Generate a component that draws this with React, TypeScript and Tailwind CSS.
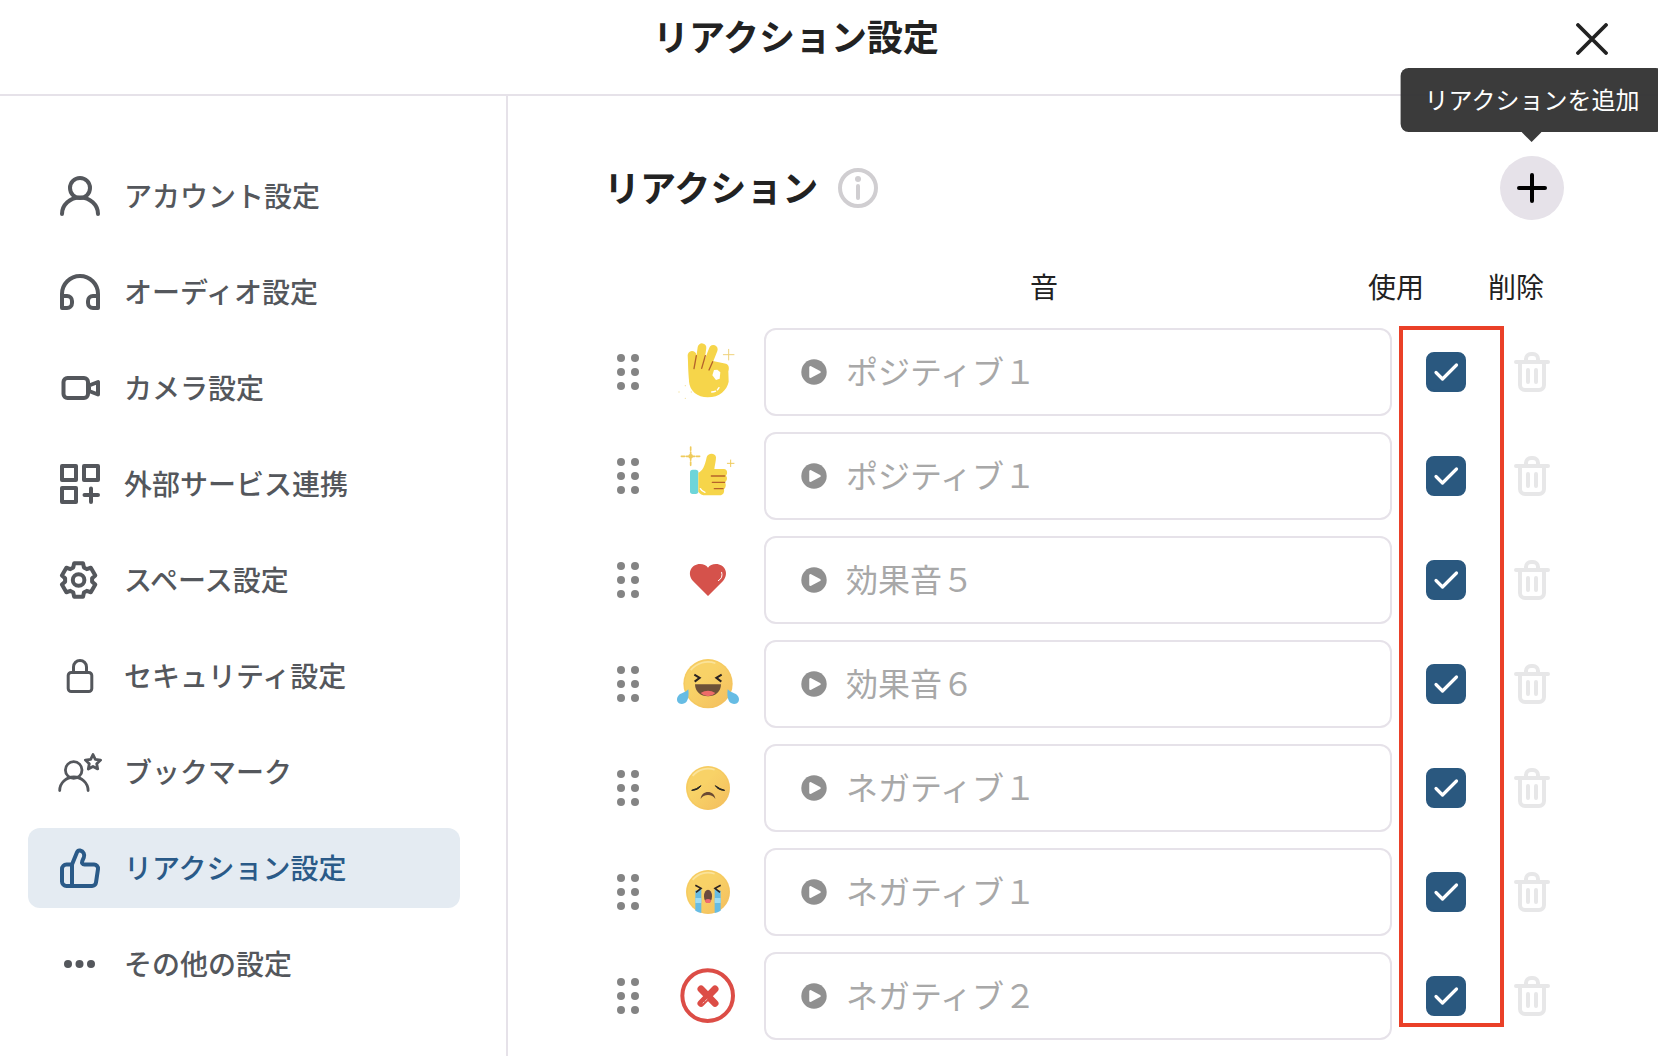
import { useState } from "react";
import type { ReactNode } from "react";

const starPoints = (cx: number, cy: number, outer: number, inner: number) =>
  Array.from({ length: 10 }, (_, i) => {
    const r = i % 2 === 0 ? outer : inner;
    const a = (Math.PI / 5) * i - Math.PI / 2;
    return `${cx + r * Math.cos(a)},${cy + r * Math.sin(a)}`;
  }).join(" ");

const gearPoints = (cx: number, cy: number) =>
  Array.from({ length: 6 }, (_, i) =>
    [
      [-23, 13.6],
      [-15, 17.3],
      [15, 17.3],
      [23, 13.6],
    ].map(([offset, r]) => {
      const a = ((i * 60 + offset - 90) * Math.PI) / 180;
      return `${cx + r * Math.cos(a)},${cy + r * Math.sin(a)}`;
    }),
  )
    .flat()
    .join(" ");

function NavIcon({ width = 4, children }: { width?: number; children: ReactNode }) {
  return (
    <svg
      viewBox="0 0 48 48"
      className="size-12 shrink-0"
      fill="none"
      stroke="currentColor"
      strokeWidth={width}
      strokeLinecap="round"
      strokeLinejoin="round"
      aria-hidden="true"
    >
      {children}
    </svg>
  );
}

const navItems: { label: string; icon: ReactNode }[] = [
  {
    label: "アカウント設定",
    icon: (
      <NavIcon>
        <circle cx="24" cy="16" r="10" />
        <path d="M6 42a18 16.5 0 0 1 36 0" />
      </NavIcon>
    ),
  },
  {
    label: "オーディオ設定",
    icon: (
      <NavIcon>
        <path d="M6 40V26a18 18 0 0 1 36 0v14h-5a5 5 0 0 1-5-5v-2a5 5 0 0 1 5-5h5M6 28h5a5 5 0 0 1 5 5v2a5 5 0 0 1-5 5H6" />
      </NavIcon>
    ),
  },
  {
    label: "カメラ設定",
    icon: (
      <NavIcon>
        <rect x="7.5" y="14" width="24.5" height="20" rx="4" />
        <path d="M33 21.5 42 18v12.500L33 27z" />
      </NavIcon>
    ),
  },
  {
    label: "外部サービス連携",
    icon: (
      <NavIcon>
        <rect x="6" y="6" width="14" height="14" />
        <rect x="28" y="6" width="14" height="14" />
        <rect x="6" y="28" width="14" height="14" />
        <path d="M35 28.500v13.500M28.500 35H42" />
      </NavIcon>
    ),
  },
  {
    label: "スペース設定",
    icon: (
      <NavIcon>
        <polygon points={gearPoints(22.6, 24)} />
        <circle cx="22.6" cy="24" r="5.8" />
      </NavIcon>
    ),
  },
  {
    label: "セキュリティ設定",
    icon: (
      <NavIcon width={3}>
        <rect x="12.2" y="20.5" width="23.6" height="19" rx="3" />
        <path d="M17.500 20v-5a6.500 6.500 0 0 1 13 0v5" />
      </NavIcon>
    ),
  },
  {
    label: "ブックマーク",
    icon: (
      <NavIcon width={2.8}>
        <circle cx="17.7" cy="22" r="8.3" />
        <path d="M3.700 42.500a14.200 13.500 0 0 1 28.400 0" />
        <polygon points={starPoints(37, 14.5, 8, 3.9)} />
      </NavIcon>
    ),
  },
  {
    label: "リアクション設定",
    icon: (
      <NavIcon>
        <path d="M16 20.500h-5.500A4.500 4.500 0 0 0 6 25v12.500a4.500 4.500 0 0 0 4.500 4.500H36a4 4 0 0 0 4-3.500l2-13.500a4 4 0 0 0-4-4.500h-9.500c-2 0-3-1.500-2.200-3.500l1.500-3.500c1.200-3-.3-6.200-3.800-7-1.300-.3-2.300.2-3 1.800L16 20.500V42" />
      </NavIcon>
    ),
  },
  {
    label: "その他の設定",
    icon: (
      <NavIcon>
        <g fill="currentColor" stroke="none">
          <circle cx="12" cy="24" r="4" />
          <circle cx="23.5" cy="24" r="4" />
          <circle cx="35" cy="24" r="4" />
        </g>
      </NavIcon>
    ),
  },
];

function OkHand() {
  return (
    <svg viewBox="216 48 216 216" className="size-[72px]" fill="none" strokeLinecap="round" aria-hidden="true">
      <g stroke="#f6d54a" strokeWidth="26">
        <path d="M276 106l4 74M306 83l-10 70M340 88l-22 56" />
      </g>
      <path
        d="M264 108l3 75c1 30 26 49 56 49 36 0 58-22 63-47l-1-31c3-10 2-20-7-23l-36-7-44 10z"
        fill="#f6d54a"
      />
      <path d="M342 150l10-1 9 8-2 19-11 4-11-14z" fill="#fff" />
      <path d="M289 107l-7 39M316 107l-11 38M338 125l-11 25" stroke="#b5632b" strokeWidth="4" />
      <path d="M335 216q15 0 22-13" stroke="#fff" strokeWidth="4" strokeDasharray="12 7" />
      <path d="M386 88v32M370 104h32" stroke="#efd27c" strokeWidth="3" />
      <g fill="#f3e2a0">
        <circle cx="237" cy="216" r="2" />
        <circle cx="256" cy="197" r="2" />
        <circle cx="274" cy="216" r="2" />
        <circle cx="256" cy="235" r="2" />
      </g>
    </svg>
  );
}

function ThumbUp() {
  return (
    <svg viewBox="216 360 216 216" className="size-[72px]" fill="none" strokeLinecap="round" aria-hidden="true">
      <rect x="270" y="449" width="25" height="73" rx="8" fill="#6dd5d9" />
      <path
        d="M295 458c12-4 20-20 25-46 3-14 27-14 28 0 0 12-4 25-5 35h29c10 0 12 13 6 20 5 6 4 14-3 20 4 7 3 15-3 21 2 11-4 18-12 18h-42c-12 0-18-4-23-11z"
        fill="#f6d54a"
      />
      <path d="M334 468h40M337 487h37M343 506h26" stroke="#b5632b" strokeWidth="4" />
      <path d="M301 506q4 8 14 11" stroke="#fff" strokeWidth="4" />
      <path d="M272 381v56M244 409h56" stroke="#efcb5c" strokeWidth="5" strokeDasharray="10 5" />
      <circle cx="272" cy="409" r="7" fill="#efcb5c" />
      <path d="M392 420v20M382 430h20" stroke="#efcb5c" strokeWidth="3" />
    </svg>
  );
}

function Heart() {
  return (
    <svg viewBox="216 42 216 216" className="size-[72px]" fill="none" strokeLinecap="round" aria-hidden="true">
      <path
        d="M324 198l-45-45c-20-24-4-51 21-51 11 0 19 4 24 11 5-7 13-11 24-11 25 0 41 27 21 51z"
        fill="#d5524b"
      />
      <path d="M365 127q5 17-10 25" stroke="#fff" strokeWidth="3" />
    </svg>
  );
}

function Face({ id, cy, r }: { id: string; cy: number; r: number }) {
  return (
    <>
      <defs>
        <linearGradient id={id} x1="0" y1="0" x2="1" y2="1">
          <stop offset="0.4" stopColor="#f8d267" />
          <stop offset="1" stopColor="#f3bd5e" />
        </linearGradient>
      </defs>
      <circle cx="324" cy={cy} r={r} fill={`url(#${id})`} />
      <circle cx="324" cy={cy} r={r - 3} stroke="#f3c35e" strokeWidth="3" opacity="0.6" />
      <path
        d={`M${324 - r * 0.7} ${cy - r * 0.55}A${r * 0.9} ${r * 0.9} 0 0 1 ${324 + r * 0.3} ${cy - r * 0.83}`}
        stroke="#fae39a"
        strokeWidth="5"
      />
    </>
  );
}

function Laugh() {
  return (
    <svg viewBox="216 354 216 216" className="size-[72px]" fill="none" aria-hidden="true">
      <Face id="face-laugh" cy={461} r={74} />
      <path d="M283 434l16 9.500-15 11.500M365 434l-16 9.500 15 11.500" stroke="#2b2320" strokeWidth="6" />
      <path d="M285 463h78c0 22-17 36-39 36s-39-14-39-36" fill="#6d5138" />
      <path d="M302 489q22-13 44 0-10 10-22 10t-22-10" fill="#ed6b69" />
      <path d="M265 478c3 24-2 44-19 44-15 0-19-15-11-25 8-9 22-9 30-19" fill="#66bce4" />
      <path d="M383 478c-3 24 2 44 19 44 15 0 19-15 11-25-8-9-22-9-30-19" fill="#66bce4" />
    </svg>
  );
}

function Sad() {
  return (
    <svg viewBox="216 36 216 216" className="size-[72px]" fill="none" aria-hidden="true">
      <Face id="face-sad" cy={144} r={66} />
      <path d="M275 151q19 0 28-14-13 10-28 14M374 151q-19 0-28-14 13 10 28 14" fill="#222" stroke="#222" strokeWidth="3" />
      <path d="M302 177c2-28 42-28 44 0-8-16-36-16-44 0" fill="#6b4a33" />
    </svg>
  );
}

function Cry() {
  return (
    <svg viewBox="216 348 216 216" className="size-[72px]" fill="none" aria-hidden="true">
      <Face id="face-cry" cy={456} r={66} />
      <path d="M286 452l18-5v72q-9-1-18-7zM362 452l-18-5v72q9-1 18-7z" fill="#66bce4" />
      <path d="M286 474h18v15h-18zM344 474h18v15h-18z" fill="#9ddcf4" />
      <path d="M286 436l17 9-15 12M362 436l-17 9 15 12" stroke="#2b2320" strokeWidth="5" />
      <ellipse cx="324" cy="469" rx="12" ry="20" fill="#6b4a3f" />
      <ellipse cx="324" cy="483" rx="9" ry="6" fill="#ef6a70" />
    </svg>
  );
}

function Cross() {
  return (
    <svg viewBox="216 660 216 216" className="size-[72px]" fill="none" strokeLinecap="round" aria-hidden="true">
      <circle cx="323" cy="767" r="76" stroke="#dc4d46" strokeWidth="12" />
      <path d="M303 747l42 43M345 747l-42 43" stroke="#dc4d46" strokeWidth="21" />
      <path d="M309 789l12-11" stroke="#fff" strokeWidth="2" strokeDasharray="3 5 9" />
    </svg>
  );
}

const reactions: { name: string; sound: string; picture: ReactNode }[] = [
  { name: "OK", sound: "ポジティブ１", picture: <OkHand /> },
  { name: "いいね", sound: "ポジティブ１", picture: <ThumbUp /> },
  { name: "ハート", sound: "効果音５", picture: <Heart /> },
  { name: "笑い", sound: "効果音６", picture: <Laugh /> },
  { name: "残念", sound: "ネガティブ１", picture: <Sad /> },
  { name: "号泣", sound: "ネガティブ１", picture: <Cry /> },
  { name: "バツ", sound: "ネガティブ２", picture: <Cross /> },
];

function ReactionRow({ name, sound, picture }: { name: string; sound: string; picture: ReactNode }) {
  const [enabled, setEnabled] = useState(true);
  return (
    <tr className="flex items-center">
      <td className="flex w-10 justify-center">
        <button type="button" aria-label={`${name}を並べ替え`} className="text-[#848484]">
          <svg viewBox="0 0 24 40" className="h-10 w-6" fill="currentColor" aria-hidden="true">
            <circle cx="5" cy="6" r="4" />
            <circle cx="19" cy="6" r="4" />
            <circle cx="5" cy="20" r="4" />
            <circle cx="19" cy="20" r="4" />
            <circle cx="5" cy="34" r="4" />
            <circle cx="19" cy="34" r="4" />
          </svg>
        </button>
      </td>
      <td className="w-[116px] pl-6">{picture}</td>
      <td className="min-w-0 flex-1">
        <button
          type="button"
          className="flex h-[88px] w-full items-center gap-4 rounded-xl border-2 border-[#e6e2e9] px-8 text-left text-[32px] leading-10 text-[#a8a8a8]"
        >
          <svg viewBox="0 0 32 32" className="size-8 shrink-0" aria-hidden="true">
            <circle cx="16" cy="16" r="12.7" fill="#909090" />
            <path d="M12.500 11.300v9.400l9-4.700z" fill="#fff" stroke="#fff" strokeWidth="2.5" strokeLinejoin="round" />
          </svg>
          <span className="pb-1">{sound}</span>
        </button>
      </td>
      <td className="flex w-[108px] justify-center">
        <label className="relative block size-10">
          <input
            type="checkbox"
            checked={enabled}
            onChange={(e) => setEnabled(e.target.checked)}
            aria-label={`${name}を使用`}
            className="peer block size-10 appearance-none rounded-lg border-2 border-[#2a587f] checked:bg-[#2a587f]"
          />
          <svg
            viewBox="0 0 40 40"
            className="pointer-events-none absolute inset-0 hidden size-10 peer-checked:block"
            fill="none"
            stroke="#fff"
            strokeWidth="3.2"
            strokeLinecap="round"
            strokeLinejoin="round"
            aria-hidden="true"
          >
            <path d="M10 20.500l6.500 6.500L30.500 13" />
          </svg>
        </label>
      </td>
      <td className="flex w-16 justify-center">
        <button type="button" aria-label={`${name}を削除`} className="text-[#e7e7e8]">
          <svg
            viewBox="0 0 40 40"
            className="size-10"
            fill="none"
            stroke="currentColor"
            strokeWidth="4"
            strokeLinecap="round"
            aria-hidden="true"
          >
            <path d="M4 10h32M14 10V7a5 5 0 0 1 5-5h2a5 5 0 0 1 5 5v3M8 10v23a5 5 0 0 0 5 5h14a5 5 0 0 0 5-5V10M16 18v12M24 18v12" />
          </svg>
        </button>
      </td>
    </tr>
  );
}

export default function App() {
  return (
    <div
      lang="ja"
      className="flex h-screen flex-col overflow-hidden bg-white font-['Noto_Sans_CJK_JP',sans-serif] text-[#222]"
    >
      <header className="flex items-start border-b-2 border-[#e6e2e9] pt-3 pr-[46px] pb-7 pl-5">
        <h1 className="flex-1 text-center text-[36px] leading-[46px] font-bold">リアクション設定</h1>
        <button type="button" aria-label="閉じる" className="flex h-[54px] w-10 items-center justify-center">
          <svg viewBox="0 0 32 32" className="size-8" stroke="currentColor" strokeWidth="3.8" strokeLinecap="round" aria-hidden="true">
            <path d="M2 2l28 28M30 2 2 30" />
          </svg>
        </button>
      </header>

      <div className="flex min-h-0 flex-1">
        <nav className="w-[508px] shrink-0 border-r-2 border-[#e6e2e9] pt-15 pr-[46px] pl-7">
          <ul className="flex flex-col gap-4">
            {navItems.map(({ label, icon }) => {
              const active = label === "リアクション設定";
              return (
                <li key={label}>
                  <button
                    type="button"
                    aria-current={active ? "page" : undefined}
                    className={
                      active
                        ? "flex h-20 w-full items-center gap-5 rounded-xl bg-[#e4ebf2] pl-7 text-[28px] leading-10 font-medium text-[#2a5a88]"
                        : "flex h-20 w-full items-center gap-5 rounded-xl pl-7 text-[28px] leading-10 font-medium text-[#54575c]"
                    }
                  >
                    {icon}
                    <span className="pb-0.5">{label}</span>
                  </button>
                </li>
              );
            })}
          </ul>
        </nav>

        <main className="min-w-0 flex-1 pt-15 pr-[94px] pl-24">
          <div className="flex h-16 items-center">
            <h2 className="pb-1 text-[36px] leading-[46px] font-bold">リアクション</h2>
            <button type="button" aria-label="リアクションの説明" className="ml-5 text-[#d0ced1]">
              <svg viewBox="0 0 40 40" className="size-10" fill="none" stroke="currentColor" strokeWidth="4" strokeLinecap="round" aria-hidden="true">
                <circle cx="20" cy="20" r="18" />
                <path d="M20 18v12" />
                <circle cx="20" cy="11" r="3" fill="currentColor" stroke="none" />
              </svg>
            </button>
            <div className="relative ml-auto">
              <button
                type="button"
                aria-label="追加"
                aria-describedby="add-reaction-tip"
                className="flex size-16 items-center justify-center rounded-full bg-[#e6e2e9] text-black"
              >
                <svg viewBox="0 0 32 32" className="size-8" stroke="currentColor" strokeWidth="4" strokeLinecap="round" aria-hidden="true">
                  <path d="M16 3v26M3 16h26" />
                </svg>
              </button>
              <div
                id="add-reaction-tip"
                role="tooltip"
                className="absolute bottom-full left-1/2 mb-6 -translate-x-1/2 rounded-lg bg-[#333]/96 px-6 pt-[11px] pb-[13px] text-2xl leading-10 whitespace-nowrap text-white"
              >
                リアクションを追加
                <svg viewBox="0 0 20 10" className="absolute top-full left-1/2 h-2.5 w-5 -translate-x-1/2" aria-hidden="true">
                  <path d="M0 0h20L10 10z" fill="#3b3b3b" />
                </svg>
              </div>
            </div>
          </div>

          <div className="relative mt-[46px] pl-1">
            <table className="block w-full">
              <thead className="block">
                <tr className="flex pb-[22px] pl-[156px] text-[28px] leading-10">
                  <th scope="col" className="flex-1 font-normal">音</th>
                  <th scope="col" className="w-36 font-normal">使用</th>
                  <th scope="col" className="w-24 font-normal">削除</th>
                </tr>
              </thead>
              <tbody className="flex flex-col gap-4">
                {reactions.map((r) => (
                  <ReactionRow key={r.name} {...r} />
                ))}
              </tbody>
            </table>
            <div
              aria-hidden="true"
              className="pointer-events-none absolute top-15 right-15 bottom-[13px] w-[105px] border-4 border-[#ea4028]"
            />
          </div>
        </main>
      </div>
    </div>
  );
}
